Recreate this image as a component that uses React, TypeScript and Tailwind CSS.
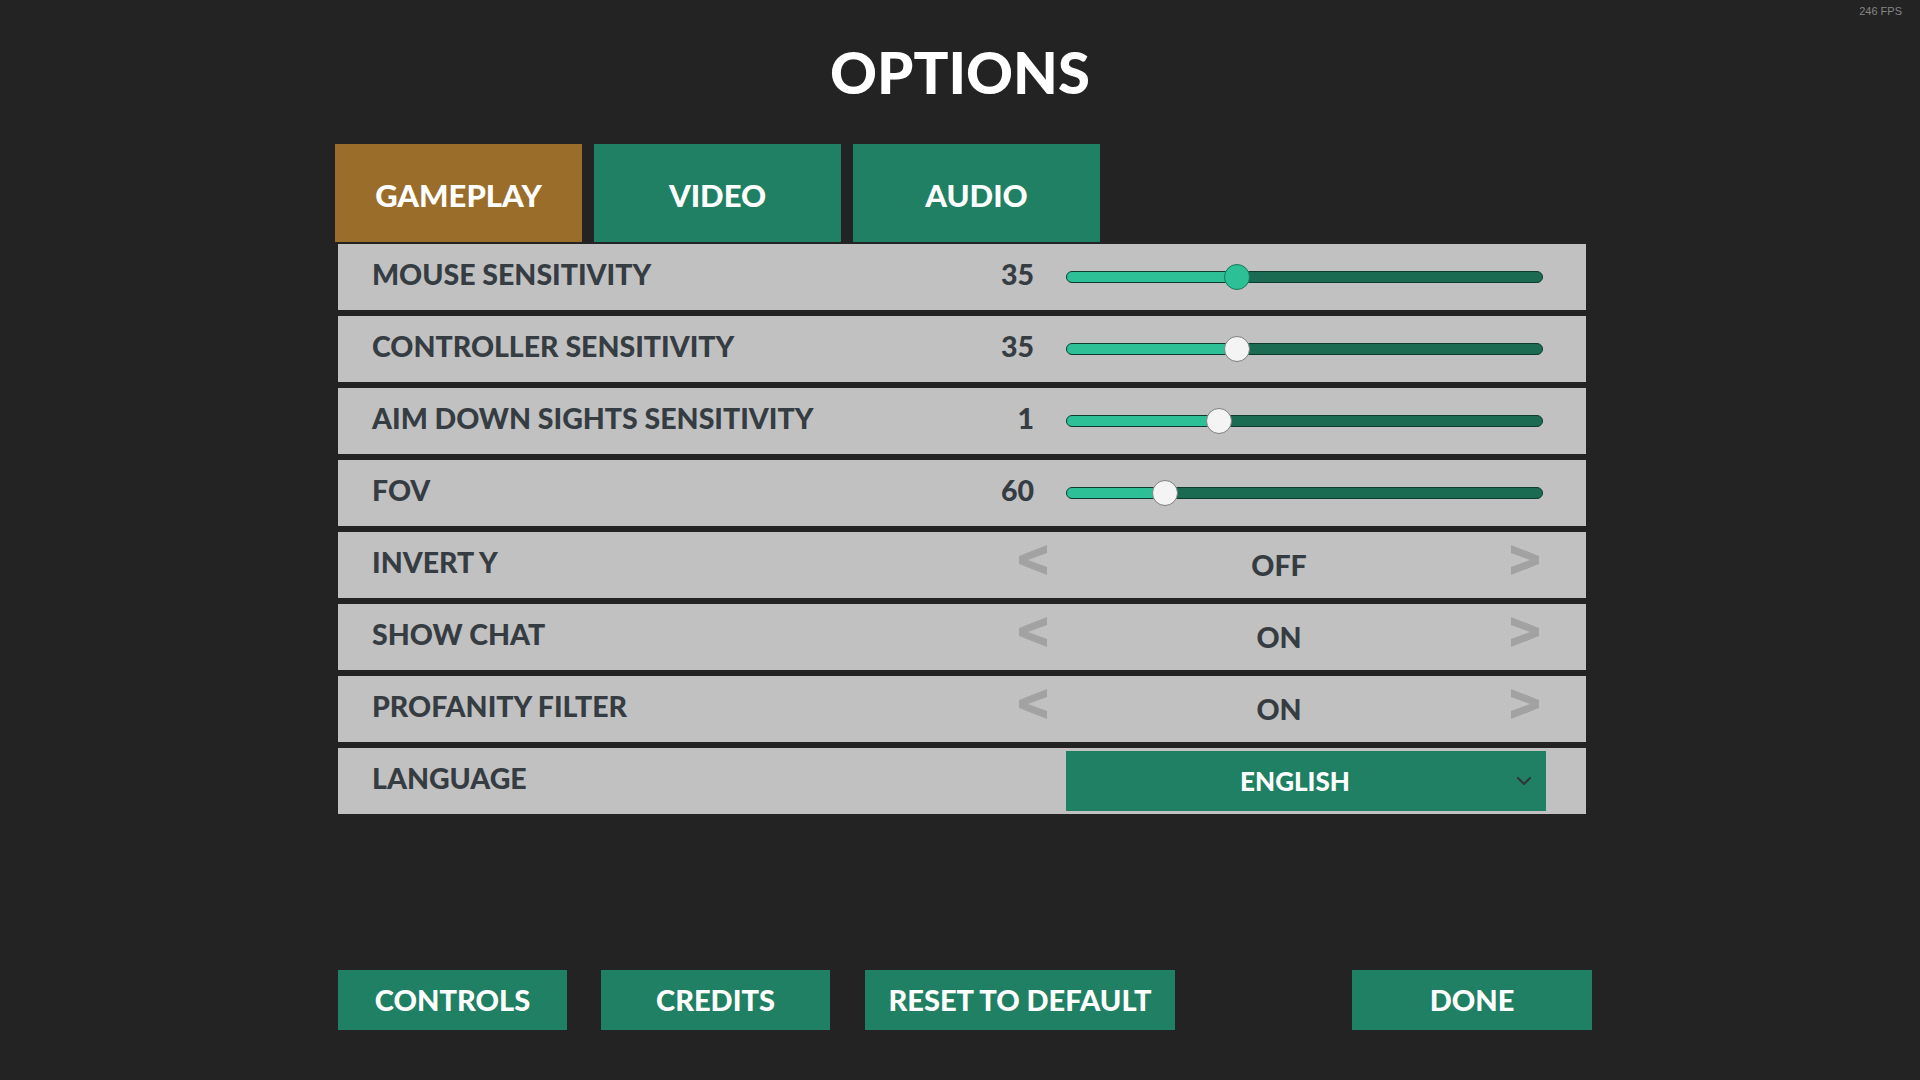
import { ChevronDown } from "lucide-react"

type Row =
  | { kind: "slider"; label: string; value: string; pos: number; active?: boolean }
  | { kind: "toggle"; label: string; value: string }
  | { kind: "select"; label: string; value: string }

const rows: Row[] = [
  { kind: "slider", label: "Mouse Sensitivity", value: "35", pos: 0.35, active: true },
  { kind: "slider", label: "Controller Sensitivity", value: "35", pos: 0.35 },
  { kind: "slider", label: "Aim Down Sights Sensitivity", value: "1", pos: 0.31 },
  { kind: "slider", label: "FOV", value: "60", pos: 0.19 },
  { kind: "toggle", label: "Invert Y", value: "Off" },
  { kind: "toggle", label: "Show Chat", value: "On" },
  { kind: "toggle", label: "Profanity Filter", value: "On" },
  { kind: "select", label: "Language", value: "English" },
]

const tabs = ["Gameplay", "Video", "Audio"]

function Arrow({ flip }: { flip?: boolean }) {
  return (
    <svg width="28" height="30" viewBox="0 0 28 30" className={flip ? "-scale-x-100" : ""}>
      <polygon points="28,0 28,8 9,15 28,22 28,30 0,19 0,11" fill="#a2a2a2" />
    </svg>
  )
}

function Slider({ pos, active }: { pos: number; active?: boolean }) {
  const travel = 451
  return (
    <div className="relative w-[477px] h-[12px] rounded-full border border-[#0f3b2e] bg-[#1b6b53]">
      <div
        className="absolute left-0 top-0 h-full rounded-l-full bg-[#2dbf95]"
        style={{ width: 13 + pos * travel }}
      />
      <div
        className={`absolute top-1/2 -translate-y-1/2 w-[26px] h-[26px] rounded-full border ${
          active ? "bg-[#2dbf95] border-[#177a5c]" : "bg-[#f4f4f4] border-[#7f7f7f]"
        }`}
        style={{ left: pos * travel - 1 }}
      />
    </div>
  )
}

export default function App() {
  return (
    <div className="relative w-[1920px] h-[1080px] bg-[#232323] font-['Lato',sans-serif] uppercase overflow-hidden">
      <div className="absolute right-[18px] top-[3px] text-[11px] text-[#858585] font-['Liberation_Sans',sans-serif] normal-case">
        246 FPS
      </div>

      {/* Title */}
      <div className="h-[144px] flex items-center justify-center">
        <h1 className="text-[58px] leading-none font-black text-white">Options</h1>
      </div>

      {/* Tabs */}
      <div className="flex gap-[12px] ml-[335px] h-[98px]">
        {tabs.map((t, i) => (
          <div
            key={t}
            className={`w-[247px] flex items-center justify-center pt-[4px] text-[31px] font-black text-white ${
              i === 0 ? "bg-[#9b6d2b]" : "bg-[#1f8063]"
            }`}
          >
            {t}
          </div>
        ))}
      </div>

      {/* Settings rows */}
      <div className="ml-[338px] w-[1248px] mt-[2px] flex flex-col gap-[6px]">
        {rows.map((row) => (
          <div key={row.label} className="h-[66px] flex items-center bg-[#c1c1c1] pl-[34px]">
            <div className="flex-1 text-[28.5px] font-black text-[#353c42] pb-[6px]">{row.label}</div>

            {row.kind === "slider" && (
              <div className="flex items-center mr-[43px]">
                <div className="w-[60px] text-right text-[28.5px] font-black text-[#353c42] pb-[6px]">{row.value}</div>
                <div className="ml-[32px]">
                  <Slider pos={row.pos} active={row.active} />
                </div>
              </div>
            )}

            {row.kind === "toggle" && (
              <div className="w-[520px] mr-[47px] flex items-center justify-between">
                <div className="pb-[10px]">
                  <Arrow />
                </div>
                <div className="text-[28.5px] font-black text-[#353c42]">{row.value}</div>
                <div className="pb-[10px]">
                  <Arrow flip />
                </div>
              </div>
            )}

            {row.kind === "select" && (
              <div className="relative w-[480px] h-[60px] mr-[40px] bg-[#1f8063] flex items-center justify-center">
                <span className="text-[26px] font-black text-white -ml-[22px]">{row.value}</span>
                <ChevronDown className="absolute right-[10px] top-1/2 -translate-y-1/2 text-[#333]" size={24} strokeWidth={2} />
              </div>
            )}
          </div>
        ))}
      </div>

      {/* Bottom buttons */}
      <div className="ml-[338px] w-[1254px] mt-[156px] flex items-center h-[60px]">
        <button className="w-[229px] h-full bg-[#1f8063] text-white text-[29px] font-black uppercase">Controls</button>
        <button className="ml-[34px] w-[229px] h-full bg-[#1f8063] text-white text-[29px] font-black uppercase">Credits</button>
        <button className="ml-[35px] w-[310px] h-full bg-[#1f8063] text-white text-[29px] font-black uppercase">Reset to Default</button>
        <button className="ml-auto w-[240px] h-full bg-[#1f8063] text-white text-[29px] font-black uppercase">Done</button>
      </div>
    </div>
  )
}
